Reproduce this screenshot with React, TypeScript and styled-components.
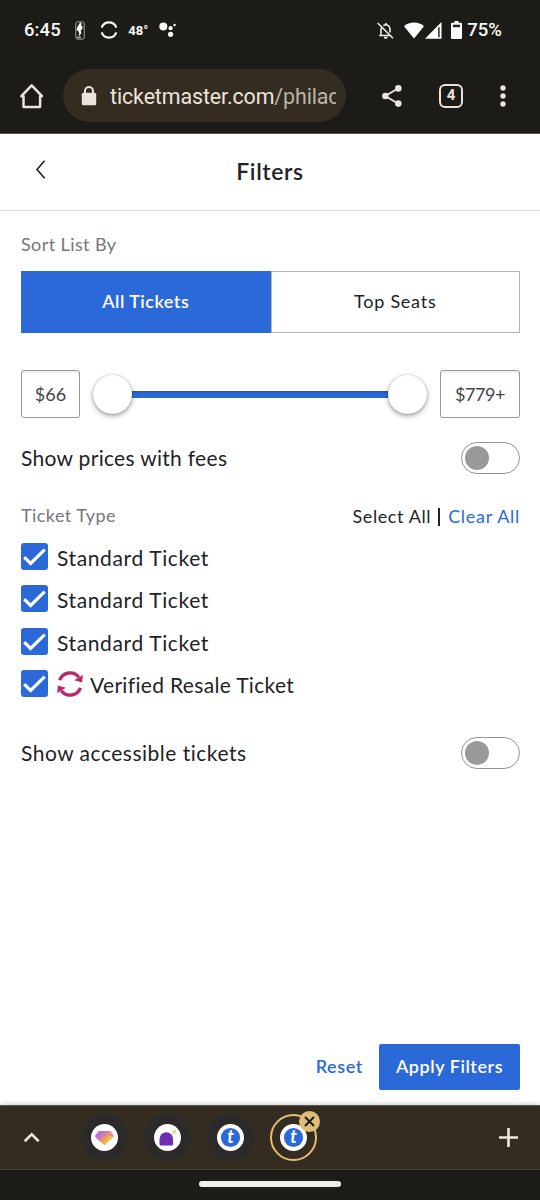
import React from "react";
import styled, { createGlobalStyle } from "styled-components";

const blue = "#2c69d8";
const sans = `Lato, "Open Sans", sans-serif`;

const Global = createGlobalStyle`
  * { box-sizing: border-box; }
  body { margin: 0; background: #fff; }
  button { font: inherit; letter-spacing: inherit; color: inherit; background: none; border: 0; padding: 0; }
  svg { display: block; flex: none; }
`;

const Screen = styled.div`
  width: 540px;
  height: 1200px;
  display: flex;
  flex-direction: column;
  overflow: hidden;
  background: #fff;
  color: #202124;
  font-family: ${sans};
`;

const Label = styled.span<{ $size?: number; $gap?: number; $weight?: number; $color?: string }>`
  font-size: ${(p) => p.$size ?? 18}px;
  letter-spacing: ${(p) => p.$gap ?? 0}px;
  font-weight: ${(p) => p.$weight ?? 400};
  color: ${(p) => p.$color ?? "#222326"};
  line-height: 1.2;
  white-space: nowrap;
`;

const BrowserTop = styled.header`
  height: 134px;
  flex: none;
  background: #1d1b17;
  border-bottom: 1px solid #55534f;
`;

const StatusBar = styled.div`
  height: 60px;
  padding: 0 38px 0 24px;
  display: flex;
  align-items: center;
  justify-content: space-between;
`;

const StatusGroup = styled.div`
  display: flex;
  align-items: center;
`;

const StatusText = styled.span<{ $size: number; $gap?: number; $left?: number; $weight?: number }>`
  font: ${(p) => p.$weight ?? 500} ${(p) => p.$size}px/1 Roboto, sans-serif;
  letter-spacing: ${(p) => p.$gap ?? 0}px;
  margin-left: ${(p) => p.$left ?? 0}px;
  color: #f8f8f6;
`;

const IconSlot = styled.span<{ $left?: number }>`
  margin-left: ${(p) => p.$left ?? 0}px;
`;

const AddressRow = styled.div`
  height: 73px;
  padding: 0 24px 2px 18px;
  display: flex;
  align-items: center;
`;

const AddressPill = styled.div`
  width: 283px;
  height: 53px;
  margin: 0 35px 0 17px;
  padding: 0 10px 0 18px;
  border-radius: 27px;
  background: #342c20;
  display: flex;
  align-items: center;
  gap: 13px;
`;

const Address = styled.div`
  flex: 1;
  overflow: hidden;
  white-space: nowrap;
  color: #ece3dc;
  font: 400 21.4px/30px Roboto, sans-serif;
  letter-spacing: -0.1px;
  padding-top: 2px;
`;

const Path = styled.span`
  color: #bdb5aa;
`;

const PageHeader = styled.div`
  height: 77px;
  flex: none;
  display: grid;
  grid-template-columns: 80px 1fr 80px;
  align-items: center;
  justify-items: center;
  border-bottom: 1px solid #dddddf;
`;

const Content = styled.main`
  flex: 1;
  padding: 23px 20px 15px 21px;
  display: flex;
  flex-direction: column;
`;

const Segments = styled.div`
  display: grid;
  grid-template-columns: 1fr 1fr;
  height: 62px;
  margin-top: 15px;
`;

const Segment = styled.button<{ $active?: boolean }>`
  background: ${(p) => (p.$active ? blue : "#fff")};
  border: 1px solid ${(p) => (p.$active ? blue : "#b5b5b5")};
`;

const PriceRow = styled.div`
  display: flex;
  align-items: center;
  height: 48px;
  margin-top: 37px;
`;

const PriceBox = styled.div<{ $width: number }>`
  width: ${(p) => p.$width}px;
  height: 48px;
  padding-top: 2px;
  display: flex;
  align-items: center;
  justify-content: center;
  border: 1px solid #999;
  border-radius: 3px;
  box-shadow: inset 0 2px 2px rgba(0, 0, 0, 0.06);
`;

const Slider = styled.div`
  flex: 1;
  margin: 1px 13px 0 13px;
  display: flex;
  align-items: center;
`;

const Thumb = styled.div`
  width: 39px;
  height: 39px;
  border-radius: 50%;
  background: #fff;
  box-shadow: 0 2px 5px rgba(0, 0, 0, 0.38), 0 0 2px rgba(0, 0, 0, 0.2);
  z-index: 1;
`;

const Track = styled.div`
  flex: 1;
  height: 7px;
  margin: 0 -3px;
  background: linear-gradient(#2454b4, ${blue} 45%);
`;

const Row = styled.div<{ $top: number; $height: number }>`
  display: flex;
  align-items: center;
  justify-content: space-between;
  height: ${(p) => p.$height}px;
  margin-top: ${(p) => p.$top}px;
`;

const Switch = styled.div`
  width: 59px;
  height: 32px;
  padding: 0 3px;
  display: flex;
  align-items: center;
  border: 1px solid #949494;
  border-radius: 16px;
`;

const Knob = styled.div`
  width: 24px;
  height: 24px;
  border-radius: 50%;
  background: #999;
`;

const Links = styled.div`
  display: flex;
  align-items: center;
  padding-top: 2px;
`;

const Divider = styled.div`
  width: 2px;
  height: 18px;
  margin: 0 8px 0 7px;
  background: #222326;
`;

const Options = styled.div`
  display: flex;
  flex-direction: column;
  margin-top: 15px;
`;

const Option = styled.label`
  height: 42.5px;
  display: flex;
  align-items: flex-start;
`;

const Box = styled.span`
  width: 27px;
  height: 27px;
  margin-right: 9px;
  border-radius: 3px;
  background: ${blue};
`;

const OptionText = styled.span<{ $afterIcon?: boolean }>`
  display: flex;
  height: 29.5px;
  align-items: center;
  margin-left: ${(p) => (p.$afterIcon ? 7 : 0)}px;
`;

const Actions = styled.div`
  margin-top: auto;
  display: flex;
  align-items: center;
  justify-content: flex-end;
  gap: 16px;
`;

const ApplyButton = styled.button`
  width: 141px;
  height: 46px;
  border-radius: 2px;
  background: ${blue};
`;

const TabStrip = styled.nav`
  height: 65px;
  flex: none;
  padding: 0 22px 0 20px;
  display: flex;
  align-items: center;
  background: #342c20;
  border-top: 1px solid #5b5850;
  border-bottom: 1px solid #484339;
  box-shadow: 0 -1px 5px rgba(0, 0, 0, 0.2);
`;

const Tabs = styled.div`
  flex: 1;
  display: flex;
  gap: 16px;
  margin: -1px 0 0 39px;
`;

const Tab = styled.div<{ $active?: boolean }>`
  position: relative;
  width: 47px;
  height: 47px;
  display: flex;
  align-items: center;
  justify-content: center;
  border-radius: 50%;
  background: ${(p) => (p.$active ? "transparent" : "#2c2a29")};
  border: ${(p) => (p.$active ? "2.5px solid #e4c077" : "0")};
`;

const CloseBadge = styled.div`
  position: absolute;
  top: -5px;
  right: -5px;
  width: 21px;
  height: 21px;
  border-radius: 50%;
  background: #dfbd78;
  display: flex;
  align-items: center;
  justify-content: center;
`;

const GestureBar = styled.footer`
  height: 30px;
  flex: none;
  display: flex;
  justify-content: center;
  padding-top: 11px;
  background: #1d1b17;
`;

const Handle = styled.div`
  width: 142px;
  height: 6px;
  border-radius: 3px;
  background: #f0efed;
`;

const NbaIcon = () => (
  <svg width="10" height="19" viewBox="0 0 10 19">
    <rect x="0.8" y="0.8" width="8.4" height="17.4" rx="2" fill="none" stroke="#b5b4b1" strokeWidth="0.9" />
    <path d="M5 1.5l1.8 1-.6 2 1.5 1.3-.8 3-1.2.2.6 3-1.7 2.7-1-.3.7-2.5-1.5-2.7-1.3 1 .8-4z" fill="#fff" />
    <path d="M2 16.3h4" stroke="#cfcfcc" strokeWidth="1.2" />
  </svg>
);

const RingIcon = () => (
  <svg width="18" height="18" viewBox="0 0 18 18" fill="none" stroke="#f8f8f6" strokeWidth="2.1">
    <path d="M1.7 6.6a7.7 7.7 0 0 1 14.6 0M1.7 11.4a7.7 7.7 0 0 0 14.6 0" />
  </svg>
);

const AssistantIcon = () => (
  <svg width="18" height="16" viewBox="0 0 18 16" fill="#f8f8f6">
    <circle cx="4.3" cy="4.6" r="4" />
    <circle cx="11.6" cy="6.2" r="2.1" />
    <circle cx="11.6" cy="12.3" r="2.6" />
    <circle cx="15.6" cy="3" r="1.2" />
  </svg>
);

const BellOffIcon = () => (
  <svg width="17" height="17" viewBox="0 0 17 17" fill="none" stroke="#eeeeec" strokeWidth="1.6">
    <path d="M.7 1l15.3 15.3M4 13.4V8q0-1.8 1-3M2.2 13.5h11M6.4 3.6q1-.8 2.4-.8 4.2.3 4.2 5v2.8M8.8 3V.9" />
    <path d="M7 15.7h3.4" strokeWidth="1.8" />
  </svg>
);

const WifiIcon = () => (
  <svg width="20" height="17" viewBox="0 0 20 17" fill="#fff">
    <path d="M0 4.2Q4.2.5 10 .5T20 4.2L10 16.5z" />
  </svg>
);

const SignalIcon = () => (
  <svg width="17" height="17" viewBox="0 0 17 17">
    <path d="M16.5 0v16.7H0z" fill="#fff" />
    <path d="M13 5.2h1.8v10H13z" fill="#4b4a47" />
  </svg>
);

const BatteryIcon = () => (
  <svg width="11" height="18" viewBox="0 0 11 18">
    <path d="M3.5 0h4v1.8H10q1 0 1 1V17q0 1-1 1H1q-1 0-1-1V2.8q0-1 1-1h2.5z" fill="#fff" />
    <path d="M1.9 3.7h7.2v2.5H1.9z" fill="#24231f" />
  </svg>
);

const HomeIcon = () => (
  <svg width="28" height="26" viewBox="0 0 28 26" fill="none" stroke="#ece3dc" strokeWidth="2.5" strokeLinejoin="round">
    <path d="M3.4 13.2L13.7 2.3l10.3 10.9h-1.9V23.5q0 .6-.6.6H6.1q-.6 0-.6-.6V13.2z" />
  </svg>
);

const LockIcon = () => (
  <svg width="16" height="20" viewBox="0 0 16 20">
    <path d="M4 8V5a4 4 0 0 1 8 0v3" fill="none" stroke="#ece3dc" strokeWidth="2" />
    <rect x="0.8" y="6.8" width="14.4" height="12.5" rx="1.5" fill="#ece3dc" />
  </svg>
);

const ShareIcon = () => (
  <svg width="22" height="24" viewBox="0 0 22 24" fill="#ece3dc">
    <path d="M17.3 4.3L4.2 12l13.1 7.7" fill="none" stroke="#ece3dc" strokeWidth="1.9" />
    <circle cx="17.3" cy="4.4" r="3.3" />
    <circle cx="4.4" cy="12" r="3.3" />
    <circle cx="17.3" cy="19.6" r="3.3" />
  </svg>
);

const TabCount = styled.div`
  width: 24px;
  height: 24px;
  margin-left: 36px;
  border: 2px solid #ece3dc;
  border-radius: 6px;
  display: flex;
  align-items: center;
  justify-content: center;
  color: #ece3dc;
  font: 700 15px/1 Roboto, sans-serif;
`;

const MoreIcon = () => (
  <svg width="6" height="22" viewBox="0 0 6 22" fill="#ece3dc">
    <circle cx="3" cy="3" r="2.7" />
    <circle cx="3" cy="11" r="2.7" />
    <circle cx="3" cy="19" r="2.7" />
  </svg>
);

const BackButton = styled.button`
  margin: -5px 0 0 1px;
`;

const BackIcon = () => (
  <svg width="10" height="19" viewBox="0 0 10 19" fill="none" stroke="#151515" strokeWidth="1.5">
    <path d="M8.6.7L1 9.5l7.6 8.8" />
  </svg>
);

const CheckIcon = () => (
  <svg width="27" height="27" viewBox="0 0 27 27" fill="none" stroke="#fff" strokeWidth="3.2">
    <path d="M3.2 14.2l6.4 6.2L23.7 6.7" />
  </svg>
);

const ResaleIcon = () => (
  <svg width="26" height="28" viewBox="0 0 26 28">
    <g fill="none" stroke="#b8296d" strokeWidth="3.4">
      <path d="M2.6 10.2A11.2 11.5 0 0 1 21.8 7.2M23.4 17.8A11.2 11.5 0 0 1 4.2 20.8" />
    </g>
    <path d="M25.8 5l-.6 7.6-8-2.4zM.2 23l.6-7.6 8 2.4z" fill="#b8296d" />
  </svg>
);

const ChevronUpIcon = () => (
  <svg width="22" height="14" viewBox="0 0 22 14" fill="none" stroke="#ece3dc" strokeWidth="2.6">
    <path d="M4.7 10.3L11.7 3.4l7 6.9" />
  </svg>
);

const PlusIcon = () => (
  <svg width="19" height="19" viewBox="0 0 19 19" stroke="#f0e8dc" strokeWidth="2.6">
    <path d="M9.5 0v19M0 9.5h19" />
  </svg>
);

const GemFavicon = () => (
  <svg width="27" height="27" viewBox="0 0 27 27">
    <circle cx="13.5" cy="13.5" r="13.5" fill="#fff" />
    <path d="M8 7h11.5l3.5 5-9.5 9L4 12z" fill="#e39682" />
    <path d="M8 7h6l-8 8-2-3z" fill="#c36bdc" />
    <path d="M14 7l-8 8 3 2.5L19 7z" fill="#d77baa" />
    <path d="M22.9 12l-9.4 9-4.3-4L14 12z" fill="#f3b650" />
    <path d="M14 12l-4.8 5 2.1 2L18 12z" fill="#f09a61" />
  </svg>
);

const DomeFavicon = () => (
  <svg width="27" height="27" viewBox="0 0 27 27">
    <circle cx="13.5" cy="13.5" r="13.5" fill="#fff" />
    <path d="M5.5 15a6.8 6.8 0 0 1 13.6 0v5q0 1.6-1.6 1.6H7q-1.5 0-1.5-1.6z" fill="#6d2db4" />
    <path d="M18.4 8.4q1-2 2.7-1.7.8.6-.2 1.8t-2.1.6" fill="none" stroke="#e8ce45" strokeWidth="1.1" />
  </svg>
);

const FaviconLetter = styled.text`
  font: italic 700 18px Lato, sans-serif;
  fill: #fff;
  text-anchor: middle;
`;

const TFavicon = () => (
  <svg width="27" height="27" viewBox="0 0 27 27">
    <circle cx="13.5" cy="13.5" r="13.5" fill="#fff" />
    <circle cx="13.5" cy="13.5" r="9.6" fill={blue} />
    <FaviconLetter x="13.5" y="19">t</FaviconLetter>
  </svg>
);

const CloseIcon = () => (
  <svg width="11" height="11" viewBox="0 0 11 11" stroke="#1d1b17" strokeWidth="2">
    <path d="M1 1l9 9M10 1l-9 9" />
  </svg>
);

const ticketTypes = [
  { name: "Standard Ticket", gap: 0.63 },
  { name: "Standard Ticket", gap: 0.63 },
  { name: "Standard Ticket", gap: 0.63 },
  { name: "Verified Resale Ticket", gap: 0.33, resale: true },
];

const Toggle = () => (
  <Switch role="switch" aria-checked={false}>
    <Knob />
  </Switch>
);

export default function App() {
  return (
    <Screen>
      <Global />
      <BrowserTop>
        <StatusBar>
          <StatusGroup>
            <StatusText $size={18.5} $gap={0.1}>6:45</StatusText>
            <IconSlot $left={14.5}><NbaIcon /></IconSlot>
            <IconSlot $left={15}><RingIcon /></IconSlot>
            <StatusText $size={13} $left={10} $weight={700}>48°</StatusText>
            <IconSlot $left={11}><AssistantIcon /></IconSlot>
          </StatusGroup>
          <StatusGroup>
            <BellOffIcon />
            <IconSlot $left={10}><WifiIcon /></IconSlot>
            <IconSlot $left={1}><SignalIcon /></IconSlot>
            <IconSlot $left={9}><BatteryIcon /></IconSlot>
            <StatusText $size={18.5} $left={5}>75%</StatusText>
          </StatusGroup>
        </StatusBar>
        <AddressRow>
          <HomeIcon />
          <AddressPill>
            <LockIcon />
            <Address>ticketmaster.com<Path>/philad</Path></Address>
          </AddressPill>
          <ShareIcon />
          <TabCount>4</TabCount>
          <IconSlot $left={37}><MoreIcon /></IconSlot>
        </AddressRow>
      </BrowserTop>

      <PageHeader>
        <BackButton><BackIcon /></BackButton>
        <Label $size={23} $gap={0.6} $weight={600}>Filters</Label>
      </PageHeader>

      <Content>
        <Label $size={18} $gap={0.4} $color="#777">Sort List By</Label>
        <Segments>
          <Segment $active><Label $size={18} $gap={0.5} $weight={600} $color="#fff">All Tickets</Label></Segment>
          <Segment><Label $size={18} $gap={0.75}>Top Seats</Label></Segment>
        </Segments>

        <PriceRow>
          <PriceBox $width={59}><Label $size={18} $color="#42464c">$66</Label></PriceBox>
          <Slider><Thumb /><Track /><Thumb /></Slider>
          <PriceBox $width={80}><Label $size={18} $gap={-0.4} $color="#42464c">$779+</Label></PriceBox>
        </PriceRow>

        <Row $top={24} $height={32}>
          <Label $size={21} $gap={0.3}>Show prices with fees</Label>
          <Toggle />
        </Row>

        <Row $top={30} $height={24}>
          <Label $size={18} $gap={0.45} $color="#777">Ticket Type</Label>
          <Links>
            <Label $size={18} $gap={0.6}>Select All</Label>
            <Divider />
            <Label $size={18} $gap={0.7} $color={blue}>Clear All</Label>
          </Links>
        </Row>

        <Options>
          {ticketTypes.map((t, i) => (
            <Option key={i}>
              <Box><CheckIcon /></Box>
              {t.resale && <ResaleIcon />}
              <OptionText $afterIcon={t.resale}>
                <Label $size={21} $gap={t.gap}>{t.name}</Label>
              </OptionText>
            </Option>
          ))}
        </Options>

        <Row $top={24} $height={32}>
          <Label $size={21} $gap={0.5}>Show accessible tickets</Label>
          <Toggle />
        </Row>

        <Actions>
          <Label $size={18} $gap={0.6} $weight={600} $color={blue}>Reset</Label>
          <ApplyButton><Label $size={18} $gap={0.55} $weight={600} $color="#fff">Apply Filters</Label></ApplyButton>
        </Actions>
      </Content>

      <TabStrip>
        <ChevronUpIcon />
        <Tabs>
          <Tab><GemFavicon /></Tab>
          <Tab><DomeFavicon /></Tab>
          <Tab><TFavicon /></Tab>
          <Tab $active>
            <TFavicon />
            <CloseBadge><CloseIcon /></CloseBadge>
          </Tab>
        </Tabs>
        <PlusIcon />
      </TabStrip>
      <GestureBar><Handle /></GestureBar>
    </Screen>
  );
}
